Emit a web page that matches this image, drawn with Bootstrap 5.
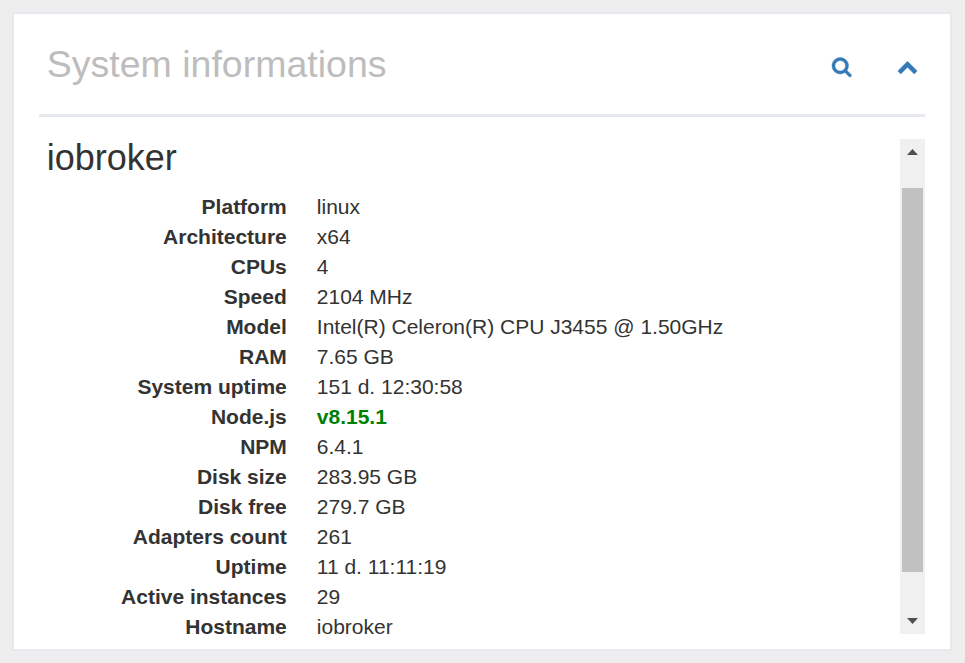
<!DOCTYPE html>
<html lang="en">
<head>
<meta charset="utf-8">
<meta name="viewport" content="width=device-width, initial-scale=1">
<title>System informations</title>
<link href="https://cdn.jsdelivr.net/npm/bootstrap@5.3.0/dist/css/bootstrap.min.css" rel="stylesheet">
<style>
  body { background: #eee; color: #333; font: 21px/30px "Liberation Sans", Arial, sans-serif; height: 663px; padding: 12px 13px 12px 12px; }
  .panel { border: 2px solid #e6e9ed; border-radius: 0; height: 639px; padding: 0 25px 15px; color: inherit; }
  .panel-title { height: 103px; border-bottom: 3px solid #e6e9ed; padding: 28px 8.5px 0 7.8px; }
  .panel-title h2 { font-size: 37.5px; line-height: 45px; color: #bdbdbd; font-weight: 400; }
  .tools { padding-top: 14px; gap: 45px; }
  .tools a { color: #337ab7; width: 20px; height: 21px; }
  .tools svg { display: block; height: 21px; fill: currentColor; stroke: currentColor; stroke-width: 36; overflow: visible; }
  .panel-content { margin-top: 22px; height: 495px; }
  .host { padding-left: 7.8px; }
  .host h3 { font-size: 36px; line-height: 40px; font-weight: 400; margin: -1px 0 14px; }
  .facts { display: grid; grid-template-columns: 240px 1fr; column-gap: 30px; }
  .facts dd { margin: 0; }
  .version { color: #008000; }
  .scroll-track { width: 25px; background: #f0f0f0; padding: 10px 2px; }
  .scroll-thumb { background: #c1c1c1; height: 384px; margin-top: 33px; }
  .scroll-track svg { display: block; margin: 0 auto; fill: #505050; }
</style>
</head>
<body>
<section class="panel card">
  <header class="panel-title d-flex justify-content-between align-items-start">
    <h2 class="m-0">System informations</h2>
    <nav class="tools d-flex">
      <a href="#" aria-label="Search"><svg viewBox="0 0 1664 1792" width="19.5"><path d="M1152 832q0-185-131.5-316.5t-316.5-131.5-316.5 131.5-131.5 316.5 131.5 316.5 316.5 131.5 316.5-131.5 131.5-316.5zm512 832q0 52-38 90t-90 38q-54 0-90-38l-343-342q-179 124-399 124-143 0-273.500-55.500t-225-150-150-225-55.500-273.500 55.500-273.500 150-225 225-150 273.500-55.500 273.500 55.500 225 150 150 225 55.500 273.500q0 220-124 399l343 343q37 37 37 90z"/></svg></a>
      <a href="#" aria-label="Collapse"><svg viewBox="0 0 1792 1792" width="21"><path d="M1683 1331l-166 165q-19 19-45 19t-45-19l-531-531-531 531q-19 19-45 19t-45-19l-166-165q-19-19-19-45.500t19-45.500l742-741q19-19 45-19t45 19l742 741q19 19 19 45.500t-19 45.500z"/></svg></a>
    </nav>
  </header>
  <div class="panel-content d-flex">
    <div class="host flex-grow-1">
      <h3>iobroker</h3>
      <dl class="facts m-0">
        <dt class="text-end">Platform</dt><dd>linux</dd>
        <dt class="text-end">Architecture</dt><dd>x64</dd>
        <dt class="text-end">CPUs</dt><dd>4</dd>
        <dt class="text-end">Speed</dt><dd>2104 MHz</dd>
        <dt class="text-end">Model</dt><dd>Intel(R) Celeron(R) CPU J3455 @ 1.50GHz</dd>
        <dt class="text-end">RAM</dt><dd>7.65 GB</dd>
        <dt class="text-end">System uptime</dt><dd>151 d. 12:30:58</dd>
        <dt class="text-end">Node.js</dt><dd class="version fw-bold">v8.15.1</dd>
        <dt class="text-end">NPM</dt><dd>6.4.1</dd>
        <dt class="text-end">Disk size</dt><dd>283.95 GB</dd>
        <dt class="text-end">Disk free</dt><dd>279.7 GB</dd>
        <dt class="text-end">Adapters count</dt><dd>261</dd>
        <dt class="text-end">Uptime</dt><dd>11 d. 11:11:19</dd>
        <dt class="text-end">Active instances</dt><dd>29</dd>
        <dt class="text-end">Hostname</dt><dd>iobroker</dd>
      </dl>
    </div>
    <div class="scroll-track d-flex flex-column flex-shrink-0">
      <svg width="11" height="6" viewBox="0 0 11 6"><path d="M0 6 5.500 0 11 6z"/></svg>
      <div class="scroll-thumb"></div>
      <svg class="mt-auto" width="11" height="6" viewBox="0 0 11 6"><path d="M0 0h11L5.500 6z"/></svg>
    </div>
  </div>
</section>
<script src="https://cdn.jsdelivr.net/npm/bootstrap@5.3.0/dist/js/bootstrap.bundle.min.js"></script>
</body>
</html>
